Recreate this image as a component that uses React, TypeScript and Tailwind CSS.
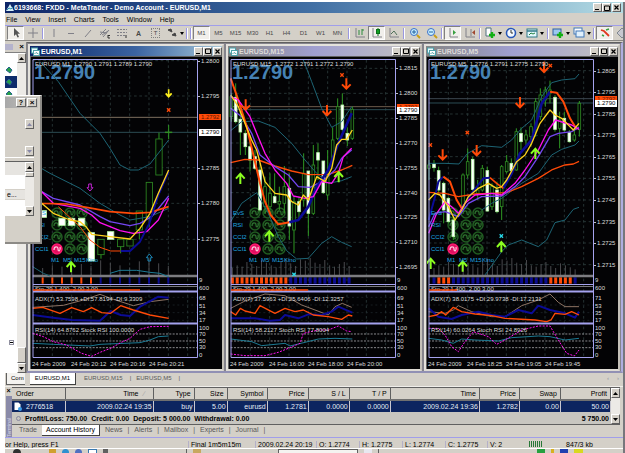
import { type ReactNode } from "react";

// x, body top, body bottom, wick top, wick bottom
type Candle = [number, number, number, number, number];
type MarkKind = "down" | "up" | "cross" | "cyanCross" | "yellowDown" | "hollowUp" | "hollowDown";
type Mark = [MarkKind, number, number];

interface Series {
  color: string;
  pts: string;
  w?: number;
  dash?: string;
}

interface ChartData {
  title: string;
  active?: boolean;
  quote: string;
  offsetX: number;
  left: number;
  prices: [string, number][];
  redY: number;
  bidY: number;
  redColor: string;
  series: Series[];
  full: Candle[];
  hollow: Candle[];
  candleWidth: number;
  barStart: number;
  barStep: number;
  barWidth: number;
  redBars: number[];
  bars: number;
  redLine: number;
  marks: Mark[];
  adxText: string;
  rsiText: string;
  adxScale: string[];
  times: string[];
}

const TEAL = "#1d6474";
const NAVY = "#0b0b96";
const RED = "#ff4a08";
const YELLOW = "#ffd21e";
const MAGENTA = "#ff10f0";
const VIOLET = "#7446f0";
const TAN = "#8f7464";

const charts: ChartData[] = [
  {
    title: "EURUSD,M1",
    active: true,
    quote: "1.2790 1.2791 1.2789 1.2790",
    offsetX: -31,
    left: 98,
    prices: [["1.2800", 62], ["1.2795", 168], ["1.2785", 383], ["1.2780", 490], ["1.2775", 598]],
    redY: 232,
    bidY: 277,
    redColor: "#7d6f60",
    candleWidth: 19,
    series: [
      { color: TEAL, pts: "120,65 175,125 240,220 300,280 330,325 360,375 390,390 415,390 450,372 506,300" },
      { color: TEAL, pts: "98,370 150,400 240,445 300,490 360,525 390,540 450,530 506,505" },
      { color: TEAL, pts: "98,680 130,700 150,708" },
      { color: "#1c7a94", pts: "330,700 360,691 410,691 450,697 480,700 506,710" },
      { color: VIOLET, pts: "98,440 125,455 160,475 240,495 300,530 330,545 390,557 420,550 455,530 506,468", w: 4 },
      { color: MAGENTA, pts: "98,430 125,455 160,490 240,505 275,525 300,548 330,560 360,572 400,580 440,575 475,540 506,475", w: 4 },
      { color: RED, pts: "98,488 125,490 200,492 260,502 330,515 400,520 450,517 506,500", w: 5 },
      { color: RED, pts: "175,500 240,560 270,600 300,622 332,633 362,633", w: 3 },
      { color: NAVY, pts: "362,633 390,633 420,605 448,550 475,465 506,395", w: 6 },
      { color: YELLOW, pts: "98,470 125,490 160,520 210,540 240,545 258,560 275,583 330,590 390,597 420,565 450,520 475,460 506,390", w: 4 },
      { color: TAN, pts: "98,802 190,796 250,780 300,763 340,778 400,797 450,785 506,778" },
      { color: NAVY, pts: "98,825 160,833 215,840 300,842 332,813 362,825 390,828 420,800 475,770 506,773", w: 6 },
      { color: RED, pts: "98,805 128,802 180,820 215,803 250,815 275,803 305,818 332,820 362,797 400,810 450,825 506,835", w: 4 },
      { color: "#1c7a94", pts: "98,910 160,913 270,918 300,913 420,908 450,900 475,890 506,888" },
      { color: MAGENTA, pts: "98,880 130,890 160,905 200,915 245,940 275,949 300,937 332,925 362,908 390,895 420,868 450,860 506,859", dash: "6 4" },
    ],
    full: [
      [130, 512, 532, 512, 532],
      [186, 535, 556, 535, 556],
      [215, 535, 556, 535, 556],
      [245, 535, 556, 535, 556],
      [274, 578, 663, 578, 663],
      [332, 575, 598, 575, 598],
    ],
    hollow: [
      [303, 598, 644, 598, 656],
      [362, 598, 620, 598, 640],
      [390, 598, 618, 598, 618],
      [418, 513, 570, 513, 598],
      [448, 427, 530, 427, 560],
      [477, 297, 405, 278, 405],
      [506, 276, 278, 255, 298],
    ],
    barStart: 128,
    barStep: 29,
    barWidth: 6,
    redBars: [0, 1, 2, 3, 4, 5],
    bars: 14,
    redLine: 109,
    marks: [
      ["yellowDown", 506, 160],
      ["cross", 506, 210],
      ["hollowUp", 448, 653],
      ["hollowDown", 270, 442],
      ["up", 213, 680],
    ],
    adxText: "ADX(7) 53.7598 +DI:57.8194 -DI:9.3309",
    rsiText: "RSI(14) 64.8762 Stock RSI 100.0000",
    adxScale: ["68", "51", "34", "17"],
    times: ["24 Feb 2009", "24 Feb 20:12", "24 Feb 20:16", "24 Feb 20:21"],
  },
  {
    title: "EURUSD,M15",
    quote: "1.2772 1.2791 1.2772 1.2790",
    offsetX: -4,
    left: 17,
    prices: [
      ["1.2815", 85], ["1.2800", 160], ["1.2785", 235], ["1.2770", 309], ["1.2755", 384],
      ["1.2740", 458], ["1.2725", 532], ["1.2710", 607], ["1.2695", 682],
    ],
    redY: 200,
    bidY: 209,
    redColor: "#6e5c4c",
    candleWidth: 8,
    series: [
      { color: TEAL, pts: "235,60 260,125 290,205 320,262 350,245 380,200" },
      { color: TEAL, pts: "17,272 50,245 100,243 150,262 200,310 240,360 275,400 310,430 350,422 380,410" },
      { color: TEAL, pts: "17,545 50,490 95,458 130,520 160,590 185,632 215,657 250,655 290,610 320,590 350,607 380,620" },
      { color: RED, pts: "17,368 60,358 100,360 150,378 200,393 250,404 310,403 350,390 382,376", w: 4 },
      { color: VIOLET, pts: "17,205 50,230 80,280 105,345 150,380 190,405 220,440 255,442 290,425 330,390 350,355 380,330", w: 4 },
      { color: RED, pts: "17,115 40,180 65,260 90,365 105,430 120,485 137,525 160,553 193,547", w: 6 },
      { color: NAVY, pts: "193,547 220,540 250,500 275,440 310,390 340,310 380,220", w: 8 },
      { color: MAGENTA, pts: "17,170 40,180 75,230 95,280 120,340 150,390 185,430 205,468 240,475 265,470 290,425 320,430 340,400 355,350 380,325", w: 4 },
      { color: YELLOW, pts: "17,165 40,200 80,300 95,330 120,425 150,460 185,465 200,485 220,495 235,465 250,480 275,410 300,425 320,385 335,315 350,298 365,298 382,270", w: 4 },
      { color: TAN, pts: "17,805 60,783 120,762 180,767 230,795 310,825 330,800 352,790 380,802" },
      { color: NAVY, pts: "17,835 90,835 135,842 165,840 180,825 220,835 250,823 290,825 320,815 340,800 382,818", w: 6 },
      { color: RED, pts: "17,815 32,825 46,805 60,813 90,820 105,797 150,820 180,805 210,815 235,810 265,825 310,830 350,838 370,825 382,828", w: 4 },
      { color: "#1c7a94", pts: "17,897 80,905 110,917 180,910 195,918 240,907 280,897 330,895 382,897" },
      { color: MAGENTA, pts: "17,942 60,947 120,947 160,937 190,925 225,910 235,880 280,870 310,870 340,858 365,873 380,875", dash: "6 4" },
    ],
    full: [
      [32, 172, 245, 130, 250],
      [46, 238, 276, 210, 345],
      [61, 280, 320, 270, 345],
      [75, 320, 360, 290, 395],
      [90, 350, 385, 330, 390],
      [105, 390, 510, 370, 515],
      [149, 470, 488, 400, 490],
      [193, 445, 558, 400, 600],
      [222, 485, 515, 470, 540],
      [250, 393, 520, 393, 588],
      [279, 338, 360, 310, 420],
      [295, 363, 458, 363, 462],
      [352, 195, 268, 160, 275],
      [367, 280, 300, 262, 318],
    ],
    hollow: [
      [19, 170, 230, 160, 245],
      [120, 440, 500, 410, 520],
      [135, 460, 500, 400, 530],
      [163, 484, 492, 440, 510],
      [178, 440, 490, 378, 520],
      [207, 485, 570, 470, 640],
      [236, 400, 480, 340, 500],
      [265, 375, 520, 315, 525],
      [308, 400, 465, 330, 480],
      [323, 300, 360, 262, 380],
      [338, 200, 295, 175, 300],
      [382, 208, 295, 200, 300],
    ],
    barStart: 22,
    barStep: 15,
    barWidth: 9,
    redBars: [0, 1, 2, 3, 4, 5, 6, 7, 8, 9, 10, 11],
    bars: 25,
    redLine: 79,
    marks: [
      ["down", 62, 195],
      ["down", 306, 212],
      ["down", 364, 132],
      ["cross", 351, 105],
      ["up", 46, 415],
      ["up", 133, 588],
      ["up", 341, 410],
      ["cyanCross", 207, 703],
    ],
    adxText: "ADX(7) 37.5963 +DI:25.6406 -DI:12.3257",
    rsiText: "RSI(14) 58.2127 Stoch RSI 77.8004",
    adxScale: ["69", "51", "34", "17"],
    times: ["24 Feb 2009", "24 Feb 16:00", "24 Feb 18:00", "24 Feb 20:00"],
  },
  {
    title: "EURUSD,M5",
    quote: "1.2776 1.2791 1.2775 1.2790",
    offsetX: -2,
    left: 11,
    prices: [
      ["1.2805", 92], ["1.2795", 157], ["1.2785", 222], ["1.2775", 286], ["1.2765", 350],
      ["1.2755", 415], ["1.2745", 480], ["1.2735", 545], ["1.2725", 609], ["1.2715", 674],
    ],
    redY: 176,
    bidY: 189,
    redColor: "#3c4650",
    candleWidth: 8,
    series: [
      { color: TEAL, pts: "11,370 60,370 102,372 128,340 170,317 230,322 260,300 290,265 320,240 350,170 380,128 410,120 450,116 462,102" },
      { color: TEAL, pts: "170,510 200,490 230,475 290,430 340,400 380,345 410,328 450,315 462,303" },
      { color: TEAL, pts: "180,705 230,635 250,615 290,600 340,620 365,600 390,548 420,540 445,508 462,502" },
      { color: RED, pts: "11,457 60,460 100,470 150,462 200,460 245,458 290,440 340,415 380,390 420,375 445,372 462,364", w: 4 },
      { color: NAVY, pts: "11,540 30,470 40,425 55,410", w: 6 },
      { color: NAVY, pts: "110,505 140,460 175,415 195,413", w: 6 },
      { color: NAVY, pts: "235,445 260,400 285,340 320,300 350,190 375,155", w: 8 },
      { color: RED, pts: "55,410 75,425 95,480 110,505", w: 6 },
      { color: RED, pts: "195,413 215,430 235,445", w: 5 },
      { color: RED, pts: "375,155 395,158 415,185 435,235 455,268", w: 6 },
      { color: VIOLET, pts: "11,560 30,520 60,515 100,530 130,490 170,470 230,468 270,440 300,410 340,350 375,290 400,280 440,275 462,262", w: 4 },
      { color: MAGENTA, pts: "11,580 35,520 60,485 80,500 100,520 120,490 150,465 200,460 230,465 270,430 300,390 340,330 370,270 392,240 440,255 462,268", w: 4 },
      { color: YELLOW, pts: "11,480 30,460 45,465 70,500 90,540 110,510 130,470 160,445 190,430 215,445 230,440 245,420 275,365 300,345 320,310 345,250 375,210 390,225 410,235 445,270 462,250", w: 4 },
      { color: TAN, pts: "11,815 60,820 85,810 100,797 140,815 200,830 240,830 290,797 340,780 375,762 400,787 420,800 462,800" },
      { color: NAVY, pts: "11,805 40,830 80,837 110,825 160,815 200,825 240,830 280,810 320,820 340,797 375,810 420,820 450,833 462,815", w: 6 },
      { color: RED, pts: "11,830 35,825 50,815 62,825 85,802 110,815 150,822 200,827 240,835 330,840 365,845 378,840 390,820 420,823 440,815 462,825", w: 4 },
      { color: "#1c7a94", pts: "11,895 50,900 85,910 110,897 150,900 220,903 260,893 340,888 375,890 420,900 462,895" },
      { color: MAGENTA, pts: "11,865 40,865 60,885 80,920 100,935 120,905 145,875 190,890 215,913 240,900 290,870 340,858 375,858 400,900 425,940 448,948 462,930", dash: "6 4" },
    ],
    full: [
      [27, 372, 383, 360, 395],
      [41, 392, 450, 380, 460],
      [56, 430, 510, 425, 550],
      [70, 475, 545, 470, 550],
      [85, 540, 590, 530, 600],
      [143, 358, 448, 350, 452],
      [187, 392, 513, 380, 515],
      [216, 450, 515, 425, 520],
      [259, 370, 392, 355, 400],
      [288, 280, 305, 262, 330],
      [390, 172, 268, 165, 275],
      [418, 235, 270, 215, 275],
      [433, 278, 305, 270, 308],
    ],
    hollow: [
      [12, 375, 385, 360, 420],
      [114, 405, 500, 400, 505],
      [128, 365, 405, 325, 415],
      [158, 450, 460, 420, 480],
      [172, 385, 450, 375, 455],
      [201, 440, 500, 430, 510],
      [230, 380, 500, 375, 540],
      [245, 365, 395, 345, 400],
      [274, 275, 390, 265, 392],
      [303, 285, 300, 270, 320],
      [318, 260, 290, 250, 320],
      [332, 185, 270, 175, 290],
      [346, 165, 230, 145, 240],
      [361, 150, 180, 140, 200],
      [375, 150, 160, 122, 190],
      [404, 240, 265, 215, 325],
      [448, 285, 300, 270, 305],
      [463, 190, 268, 183, 290],
    ],
    barStart: 27,
    barStep: 15,
    barWidth: 9,
    redBars: [1, 2, 3, 24, 25, 26, 27, 28],
    bars: 30,
    redLine: 30,
    marks: [
      ["down", 53, 345],
      ["down", 155, 332],
      ["down", 285, 188],
      ["down", 357, 82],
      ["cross", 127, 278],
      ["cross", 16, 315],
      ["cross", 376, 77],
      ["up", 331, 340],
      ["up", 229, 620],
      ["up", 113, 678],
      ["up", 17, 670],
      ["cyanCross", 229, 588],
    ],
    adxText: "ADX(7) 38.0175 +DI:29.9738 -DI:17.2131",
    rsiText: "RSI(14) 60.0264 Stoch RSI 24.8926",
    adxScale: ["71", "53", "35", "17"],
    times: ["24 Feb 2009", "24 Feb 18:25", "24 Feb 19:05", "24 Feb 19:45"],
  },
];

const volumes = [22, 30, 26, 40, 34, 28, 45, 38, 30, 24, 42, 50, 36, 28, 48, 44, 52, 38, 34, 46, 30, 26, 34, 40, 28, 22, 36, 30, 24, 18, 22];

const markShapes: Record<MarkKind, ReactNode> = {
  down: <path d="M0-17V12M-13 1L0 14L13 1" fill="none" stroke={RED} strokeWidth="6" />,
  up: <path d="M0 17V-12M-13 1L0-14L13 1" fill="none" stroke="#8cff20" strokeWidth="6" />,
  yellowDown: <path d="M0-12V8M-9 0L0 10L9 0" fill="none" stroke="#fff01e" strokeWidth="5" />,
  cross: <path d="M-5-5L5 5M5-5L-5 5" stroke={RED} strokeWidth="4" />,
  cyanCross: <path d="M-5-5L5 5M5-5L-5 5" stroke="#28d8e8" strokeWidth="4" />,
  hollowUp: <path d="M0-11L9 0H4V10H-4V0H-9Z" fill="none" stroke="#1c88b8" strokeWidth="3" />,
  hollowDown: <path d="M0 11L9 1H4V-10H-4V1H-9Z" fill="none" stroke="#c020d0" strokeWidth="3" />,
};

const lampCols = [26, 39, 51];
const lampRows = [156, 168, 180, 192];

function Lamp({ x, y, red }: { x: number; y: number; red?: boolean }) {
  return (
    <g transform={`translate(${x} ${y})`}>
      <circle r="5" fill={red ? "#e01060" : "#061206"} stroke={red ? "#ff1a70" : "#215c22"} strokeWidth="1.5" />
      <path d="M-3 1C-3-3 1-3 1 0S4 2 3-2" fill="none" stroke={red ? "#ffc0d8" : "#2c6e2e"} strokeWidth="1.3" />
    </g>
  );
}

function Candles({ data, width, filled }: { data: Candle[]; width: number; filled?: boolean }) {
  return (
    <>
      {data.map(([x, top, bottom, high, low]) => (
        <g key={x}>
          <path d={`M${x} ${high}V${low}`} stroke="#2f9a24" strokeWidth="3" />
          <rect
            x={x - width / 2}
            y={top}
            width={width}
            height={bottom - top}
            fill={filled ? "#ffffff" : "#020802"}
            stroke={filled ? "#b8f8a8" : "#2f8a24"}
            strokeWidth="2.5"
          />
        </g>
      ))}
    </>
  );
}

function PriceChart({ c }: { c: ChartData }) {
  const toY = (y: number) => Math.round(y / 3) - 17;
  const right = c.left + 495;
  const vertical: number[] = [];
  for (let x = c.left + 59; x < c.left + 490; x += 58) vertical.push(x);
  const barXs = Array.from({ length: c.bars }, (_, i) => c.barStart + i * (c.barStep === 15 ? 14.6 : c.barStep));

  return (
    <svg viewBox="0 0 191 312" className="block w-full bg-[#030305] font-['Liberation_Sans',Arial,sans-serif]" role="img" aria-label={`${c.title} chart`}>
      <g transform={`translate(${c.offsetX} -17) scale(.33333)`}>
        {/* grid */}
        <g stroke="#2c3c3c" strokeWidth="2.5" strokeDasharray="8 8">
          {vertical.map((x) => <path key={x} d={`M${x} 60V953`} />)}
          {c.prices.map(([, y]) => <path key={y} d={`M${c.left} ${y}H${right}`} />)}
        </g>
        {c.adxScale.map((s, i) => (
          <path key={s} d={`M${c.left} ${772 + i * 23}H${right}`} stroke="#232c30" strokeWidth="2" strokeDasharray="6 8" />
        ))}
        {[882, 903, 923].map((y) => (
          <path key={y} d={`M${c.left} ${y}H${right}`} stroke="#8c8c90" strokeWidth="3" strokeDasharray="6 4" />
        ))}
        <path d={`M${c.left} ${c.redY}H${right}`} stroke={c.redColor} strokeWidth="3" />
        <path d={`M${c.left} ${c.bidY}H${right}`} stroke="#2c4c54" strokeWidth="3" />

        {/* volume and candle strip */}
        {barXs.map((x, i) => (
          <g key={x}>
            <path d={`M${x} ${706 - volumes[i]}V706`} stroke="#4a4a4e" strokeWidth="3" />
            <path d={`M${x} 712V731`} stroke={c.redBars.includes(i) ? RED : "#0c0c90"} strokeWidth={c.barWidth} />
          </g>
        ))}
        <path d={`M${c.left} 708H${right}`} stroke="#7c7c80" strokeWidth="7" />
      </g>

      <text x="3" y="22" className="fill-[#4682b4] text-[20px] font-bold">1.2790</text>

      {/* signal lamps */}
      {lampRows.map((y, row) =>
        lampCols.map((x, col) => <Lamp key={`${x}-${y}`} x={x} y={y} red={row === 3 && col === 0} />)
      )}

      <g transform={`translate(${c.offsetX} -17) scale(.33333)`}>
        <Candles data={c.hollow} width={c.candleWidth} />
        <Candles data={c.full} width={c.candleWidth} filled />
        {c.series.map((s) => (
          <polyline key={s.pts} points={s.pts} fill="none" stroke={s.color} strokeWidth={s.w ?? 3} strokeDasharray={s.dash} strokeLinejoin="round" />
        ))}
        {c.marks.map(([kind, x, y]) => (
          <g key={`${x}-${y}`} transform={`translate(${x} ${y})`}>{markShapes[kind]}</g>
        ))}
      </g>

      <g className="fill-[#1ea8e0] text-[6px]">
        {["EvS", "RSI", "CCI2", "CCI1"].map((label, i) => (
          <text key={label} x="4" y={lampRows[i] + 2}>{label}</text>
        ))}
        <text x="20" y="205">M1</text>
        <text x="32" y="205">M5</text>
        <text x="43" y="205">M15</text>
        <text x="55" y="205">Kino</text>
      </g>

      {/* sub-window frames */}
      <g fill="none" stroke="#a4a2ee">
        <path d="M2 2.5H166.5V300.5H2Z" />
        <path d="M2 227.5H166" />
        <path d="M2 234.5H166" strokeWidth="2" />
        <path d="M2 266.5H166" strokeWidth="2" />
      </g>
      <path d="M2 229.5H166" stroke="#77777c" />

      <g className="fill-[#dcdcdc] text-[6px]">
        <text x="4" y="9">{c.title}&nbsp; {c.quote}</text>
        <text x="4" y="234">Sto-29 1.400, 2.00 3.00</text>
        <text x="4" y="244">{c.adxText}</text>
        <text x="4" y="275">{c.rsiText}</text>
        {c.prices.map(([label, y]) => (
          <text key={label} x="170" y={toY(y) + 2}>{label}</text>
        ))}
        <text x="168" y="225">9</text>
        <text x="168" y="233">600</text>
        {c.adxScale.map((s, i) => (
          <text key={s} x="168" y={[243, 251, 258, 265][i]}>{s}</text>
        ))}
        {["100", "70", "50", "30", "0"].map((s, i) => (
          <text key={s} x="168" y={[273, 279, 286, 292, 300][i]}>{s}</text>
        ))}
        {c.times.map((t, i) => (
          <text key={t} x={1 + i * 39} y="309">{t}</text>
        ))}
      </g>
      <path d={`M2 233H${c.redLine}`} stroke={RED} strokeWidth="1.5" />
      {c.prices.map(([label, y]) => <path key={label} d={`M167 ${toY(y)}.5h2`} stroke="#c0c0c0" />)}
      <rect x="168" y={toY(c.redY) - 3} width="22" height="6" fill={RED} />
      <text x="170" y={toY(c.redY) + 2} className="fill-[#5a1400] text-[6px]">1.2792</text>
      <rect x="168" y={toY(c.bidY) - 3} width="22" height="7" fill="#fff" />
      <text x="170" y={toY(c.bidY) + 2} className="fill-black text-[6px]">1.2790</text>
    </svg>
  );
}

const raised = "border border-t-white border-l-white border-r-[#606060] border-b-[#606060] bg-[#d4d0c8]";

function CaptionButtons() {
  return (
    <div className="flex shrink-0">
      <button aria-label="Minimize" className={`${raised} flex h-[9px] w-[9px] items-end justify-center pb-px`}>
        <svg viewBox="0 0 5 5" className="h-[5px] w-[5px]"><path d="M0 4.5H4" stroke="#000" /></svg>
      </button>
      <button aria-label="Maximize" className={`${raised} flex h-[9px] w-[9px] items-center justify-center`}>
        <svg viewBox="0 0 6 6" className="h-[6px] w-[6px]"><path d="M.5 1H5.5V5.5H.5Z" fill="none" stroke="#000" /></svg>
      </button>
      <button aria-label="Close" className={`${raised} ml-px flex h-[9px] w-[9px] items-center justify-center`}>
        <svg viewBox="0 0 5 5" className="h-[5px] w-[5px]"><path d="M.5.5L4.5 4.5M4.5.5L.5 4.5" stroke="#000" strokeWidth="1.2" /></svg>
      </button>
    </div>
  );
}

function ChartWindow({ c }: { c: ChartData }) {
  return (
    <section className="min-w-0 border-2 border-[#e4e2dc] border-r-[#c4c0b8] border-b-[#dedbd4] bg-[#d4d0c8]">
      <header
        className={
          c.active
            ? "flex h-[10px] items-center bg-linear-to-r from-[#0d2568] via-[#3b63a0] via-55% to-[#a8c8d8] text-white"
            : "flex h-[10px] items-center bg-linear-to-r from-[#858585] via-[#a09fd0] via-45% to-[#c4c2be] text-[#dedcda]"
        }
      >
        <svg viewBox="0 0 9 9" className="ml-px h-[9px] w-[9px] shrink-0">
          <rect x=".5" y="1" width="6" height="5" fill="#e8fbff" stroke="#4fa0a8" />
          <rect x="2.5" y="3.5" width="6" height="5" fill="#fff" stroke="#4fa0a8" />
          <path d="M3.5 7L5 5.5L7.5 7" stroke="#2a8a90" fill="none" strokeWidth=".8" />
        </svg>
        <h2 className="ml-px flex-1 truncate text-[7px] leading-[9px] font-bold">{c.title}</h2>
        <CaptionButtons />
      </header>
      <div className="border-t border-l border-[#606060]">
        <PriceChart c={c} />
      </div>
    </section>
  );
}

function Sep({ wide }: { wide?: boolean }) {
  return (
    <span className={`flex shrink-0 items-center justify-center ${wide ? "w-[5px]" : "w-[4px]"}`}>
      <span className="h-[11px] w-[2px] border-l border-[#9a98e0] bg-white" />
    </span>
  );
}

function Tool({ label, pressed, caret, children }: { label: string; pressed?: boolean; caret?: boolean; children: ReactNode }) {
  return (
    <button
      aria-label={label}
      className={`flex h-[14px] shrink-0 items-center justify-center text-[6px] leading-[9px] text-[#484848] ${caret ? "w-[21px]" : "w-[17px]"} ${pressed ? "border border-t-[#808080] border-r-white border-b-white border-l-[#808080] bg-[#f1efeb]" : ""}`}
    >
      {children}
      {caret && <svg viewBox="0 0 4 3" className="ml-[2px] h-[3px] w-[4px]"><path d="M0 0H4L2 3Z" /></svg>}
    </button>
  );
}

function Glyph({ children }: { children: ReactNode }) {
  return <svg viewBox="0 0 12 12" className="h-[12px] w-[12px]" fill="none" stroke="#808088" strokeWidth="1">{children}</svg>;
}

const plus = <path d="M8 5V11M5 8H11" stroke="#12b012" strokeWidth="2.4" />;

function Toolbar() {
  return (
    <div className="flex h-[15px] items-center overflow-hidden border-b border-[#8a8884] pl-[2px]" role="toolbar" aria-label="Charts">
      <Tool label="Cursor" pressed><Glyph><path d="M4 1V9L6 7.2L7.5 10.5L9 10L7.5 6.8H10Z" fill="#555" stroke="none" /></Glyph></Tool>
      <Tool label="Crosshair"><Glyph><path d="M6 1V11M1 6H11" /></Glyph></Tool>
      <Sep />
      <Tool label="Vertical line"><Glyph><path d="M6 2V10" /></Glyph></Tool>
      <Tool label="Horizontal line"><Glyph><path d="M3 6.5H9" /></Glyph></Tool>
      <Tool label="Trendline"><Glyph><path d="M3 10L9 3" /></Glyph></Tool>
      <Tool label="Channel"><Glyph><path d="M1 8L7 2M4 10L10 3M1 5L8 6M3 8L9 4" /><path d="M9 8.5H11M9 8V11H11" stroke="#333" /></Glyph></Tool>
      <Tool label="Fibonacci"><Glyph><path d="M1 2.5H11M1 5.5H11M1 8.5H9" strokeDasharray="2 1" /><path d="M10 8V11" stroke="#333" /></Glyph></Tool>
      <Tool label="Text"><span className="text-[7px] font-bold">A</span></Tool>
      <Tool label="Text label"><span className="border border-dotted border-[#808080] px-[2px] leading-[8px]">T</span></Tool>
      <Tool label="Arrows" caret><Glyph><path d="M2 3L5 2L6 5ZM6 8L9 6L10 9Z" fill="#444" stroke="#444" /></Glyph></Tool>
      <Sep /><Sep />
      {["M1", "M5", "M15", "M30", "H1", "H4", "D1", "W1", "MN"].map((p) => (
        <Tool key={p} label={p} pressed={p === "M1"}>{p}</Tool>
      ))}
      <Sep wide />
      <Tool label="Bar chart"><Glyph><path d="M2 1V10H11" /><path d="M5 3V8M8 2V8M8 3H10" stroke="#2c8a3c" /></Glyph></Tool>
      <Tool label="Candlesticks" pressed><Glyph><path d="M2 1V10H11" /><path d="M7 1V9" stroke="#087018" /><rect x="5.5" y="2.5" width="3" height="4" fill="#12a022" stroke="#087018" /></Glyph></Tool>
      <Tool label="Line chart"><Glyph><path d="M2 1V10H11" /><path d="M3 7L6 4L9 8" stroke="#507058" /></Glyph></Tool>
      <Sep />
      <Tool label="Zoom in"><Glyph><circle cx="5" cy="5" r="3.5" fill="#c8f0ff" stroke="#3c70c8" /><path d="M5 3V7M3 5H7" stroke="#2060a0" /><path d="M8 8L11 11" stroke="#c8a018" strokeWidth="2" /></Glyph></Tool>
      <Tool label="Zoom out"><Glyph><circle cx="5" cy="5" r="3.5" fill="#c8f0ff" stroke="#3c70c8" /><path d="M3 5H7" stroke="#2060a0" /><path d="M8 8L11 11" stroke="#c8a018" strokeWidth="2" /></Glyph></Tool>
      <Sep />
      <Tool label="Auto scroll" pressed><Glyph><path d="M3 1V10H11" /><path d="M6 3L9 5.5L6 8Z" fill="#38a040" stroke="none" /></Glyph></Tool>
      <Tool label="Chart shift"><Glyph><path d="M2 1V10H11M7 2V9" /><path d="M11 3L8 5.5L11 8Z" fill="#a04830" stroke="none" /></Glyph></Tool>
      <Sep />
      <Tool label="Indicators" caret><Glyph><path d="M2 1H7V9H2Z" fill="#fff" stroke="#507080" />{plus}</Glyph></Tool>
      <Tool label="Periods" caret><Glyph><circle cx="6" cy="6" r="4.5" fill="#f4faff" stroke="#2858b8" strokeWidth="1.6" /><path d="M6 3V6H8" stroke="#333" /></Glyph></Tool>
      <Tool label="Templates" caret><Glyph><rect x="1" y="2" width="10" height="8" fill="#e4f8fc" stroke="#307888" /><path d="M1 4H11" stroke="#307888" strokeWidth="1.5" /><path d="M3 8L5 6L7 7L9 6" stroke="#208040" /></Glyph></Tool>
      <Sep wide />
      <Tool label="New order" caret><Glyph><rect x="1" y="2" width="8" height="6" fill="#9cc8f0" stroke="#3060a0" />{plus}</Glyph></Tool>
      <Tool label="Windows" caret><Glyph><rect x="1" y="1" width="8" height="6" fill="#fff" stroke="#4078b8" /><rect x="3" y="4" width="8" height="6" fill="#e0f0fc" stroke="#4078b8" /></Glyph></Tool>
      <Sep />
      <Tool label="Expert advisors" pressed><Glyph><path d="M2 3L5 4L10 9" stroke="#e03820" strokeWidth="1.8" /><path d="M7 3L10 2M3 8L5 9" stroke="#38a040" strokeWidth="1.5" /></Glyph></Tool>
      <Tool label="Options"><Glyph><path d="M6 1L11 6L6 11L1 6Z" fill="#c8c8d0" stroke="#808890" /></Glyph></Tool>
    </div>
  );
}

function Arrow({ up, dim }: { up?: boolean; dim?: boolean }) {
  return (
    <button aria-label={up ? "Scroll up" : "Scroll down"} className={`${raised} flex h-[10px] w-[9px] shrink-0 items-center justify-center`}>
      <svg viewBox="0 0 5 3" className="h-[3px] w-[5px]"><path d={up ? "M0 3H5L2.5 0Z" : "M0 0H5L2.5 3Z"} fill={dim ? "#8888a8" : "#000"} /></svg>
    </button>
  );
}

function Navigator() {
  return (
    <aside className="flex w-[22px] shrink-0 flex-col border-r border-[#808080]">
      <div className="flex h-[10px] items-center justify-between pr-[2px]">
        <span className="h-[6px] w-[8px] bg-[#b4b3cc]" />
        <button aria-label="Close navigator" className="text-[8px] leading-[8px] font-bold">×</button>
      </div>
      <div className="flex flex-1 border-t border-[#808080] bg-white">
        <div className="relative flex-1">
          <ul className="pt-[11px]">
            {[0, 1, 2].map((i) => (
              <li key={i} className={i === 1 ? "flex h-[12px] items-center bg-[#0e2c6c]" : "flex h-[12px] items-center"}>
                <svg viewBox="0 0 8 8" className="h-[8px] w-[8px]"><path d="M1 4L4 1L7 4L5 7Z" fill="#28a048" stroke="#286090" /></svg>
              </li>
            ))}
          </ul>
          <span className="absolute bottom-[28px] left-[4px] flex h-[5px] w-[5px] items-center border border-[#9090a0]"><span className="h-px w-full bg-black" /></span>
        </div>
        <div className="flex w-[9px] flex-col justify-between bg-[#eceae6]">
          <Arrow up />
          <div>
            <div className={`${raised} h-[16px]`} />
            <Arrow />
          </div>
        </div>
      </div>
    </aside>
  );
}

function FloatingDialog() {
  return (
    <div role="dialog" aria-label="Properties" className="absolute top-[54px] left-0 flex h-[149px] w-[37px] flex-col border-t border-r-2 border-b-2 border-t-white border-r-[#8c8a86] border-b-[#8c8a86] bg-[#d4d0c8]">
      <div className="mt-px mr-[2px] flex h-[11px] items-center justify-end gap-px bg-linear-to-r from-[#a8a8a8] to-[#c4c2be] pr-px">
        <button aria-label="Help" className={`${raised} flex h-[9px] w-[10px] items-center justify-center text-[7px] leading-[7px] font-bold`}>?</button>
        <button aria-label="Close" className={`${raised} flex h-[9px] w-[10px] items-center justify-center text-[8px] leading-[7px] font-bold`}>×</button>
      </div>
      <div className="mt-[11px] mr-[6px] flex h-[39px] flex-col items-end justify-between border-b border-white pb-px">
        <Arrow up dim />
        <Arrow dim />
      </div>
      <div className="mt-[3px] mr-[6px] flex h-[55px] border-t border-[#606060] bg-white">
        <div className="flex-1">
          <div className="h-[13px] bg-[#e6e4e0]" />
          <div className="mt-[14px] h-[11px] border-y border-[#d4d0c8] bg-[#e6e4e0] pl-[2px] text-[7px] leading-[9px]">e...</div>
        </div>
        <div className="flex w-[9px] flex-col bg-[#eceae6]">
          <Arrow up />
          <div className={`${raised} h-[5px]`} />
          <div className="flex-1" />
          <Arrow />
        </div>
      </div>
    </div>
  );
}

const columns: [string, number, string][] = [
  ["Order", 53, "2776518"],
  ["Time", 88, "2009.02.24 19:35"],
  ["Type", 41, "buy"],
  ["Size", 33, "5.00"],
  ["Symbol", 40, "eurusd"],
  ["Price", 41, "1.2781"],
  ["S / L", 41, "0.0000"],
  ["T / P", 41, "0.0000"],
  ["Time", 89, "2009.02.24 19:36"],
  ["Price", 40, "1.2782"],
  ["Swap", 41, "0.00"],
  ["Profit", 50, "50.00"],
];

function Terminal() {
  return (
    <section className="flex pr-[3px]" aria-label="Terminal">
      <div className="flex w-[7px] shrink-0 flex-col items-center overflow-hidden">
        <button aria-label="Close terminal" className="text-[7px] leading-[7px] font-bold">×</button>
        <span className="mt-[2px] w-[6px] flex-1 bg-[#8a8aa8] text-[5px] leading-[6px] text-[#d8d8e8] [writing-mode:sideways-lr]">Terminal</span>
      </div>
      <div className="min-w-0 flex-1">
        <div className="flex border-t border-b border-[#606060]">
          <div className="min-w-0 flex-1 bg-[#d4d0c8]">
            <table className="w-full table-fixed border-collapse text-[7px] leading-[9px]">
              <colgroup>{columns.map(([, w], i) => <col key={i} style={{ width: w }} />)}</colgroup>
              <thead>
                <tr className="h-[12px] border-b-2 border-[#707070]">
                  {columns.map(([name], i) => (
                    <th key={i} className={`border-r border-[#606060] font-normal ${i === 0 ? "pl-[4px] text-left" : "pr-[3px] text-right"}`}>
                      {name}{i === 1 && <span className="mr-[5px] ml-[5px] text-[#a0a0a0]">∕</span>}
                    </th>
                  ))}
                </tr>
              </thead>
              <tbody>
                <tr className="h-[12px] bg-[#0d2560] text-[#e4ecf4]">
                  {columns.map(([, , value], i) => (
                    <td key={i} className={`border-r border-[#c8c8d0] p-0 ${i === 0 ? "pl-[2px]" : "pr-px text-right"}`}>
                      {i === 0 ? (
                        <span className="flex items-center gap-[4px]">
                          <svg viewBox="0 0 8 9" className="h-[9px] w-[8px]"><path d="M.5.5H4.5L6.5 2.5V8H.5Z" fill="#fff" /><circle cx="6" cy="7" r="2" fill="#3c9ce8" /></svg>
                          {value}
                        </span>
                      ) : value}
                    </td>
                  ))}
                </tr>
              </tbody>
            </table>
            <div className="flex h-[12px] items-center justify-between bg-[#c8c6c0] pr-[2px] pl-[4px] text-[7px] leading-[9px] font-bold">
              <span className="flex items-center gap-[4px]">
                <span className="h-[5px] w-[5px] rounded-full border border-[#8888a0]" />
                Profit/Loss: 750.00&nbsp; Credit: 0.00&nbsp; Deposit: 5 000.00&nbsp; Withdrawal: 0.00
              </span>
              <span>5 750.00</span>
            </div>
          </div>
          <div className="flex w-[9px] flex-col bg-[#eceae6]">
            <Arrow up />
            <div className="flex-1" />
            <Arrow />
          </div>
        </div>
        <nav className="flex h-[12px] items-start text-[7px] leading-[10px] text-[#585858]" aria-label="Terminal tabs">
          <button className="w-[30px] pl-[2px]">Trade</button>
          <button className="w-[58px] border-r border-b border-[#404040] bg-white text-black">Account History</button>
          {["News", "Alerts", "Mailbox", "Experts", "Journal"].map((t) => (
            <button key={t} className="flex items-center gap-[5px] pl-[5px]">{t}<span>|</span></button>
          ))}
        </nav>
      </div>
    </section>
  );
}

const status: [string, string][] = [
  ["Final 1m5m15m", "w-[67px]"],
  ["2009.02.24 20:19", "w-[61px]"],
  ["O: 1.2774", "w-[43px]"],
  ["H: 1.2775", "w-[43px]"],
  ["L: 1.2774", "w-[43px]"],
  ["C: 1.2775", "w-[42px]"],
  ["V: 2", "w-[38px]"],
];

export default function App() {
  return (
    <div className="min-h-screen overflow-hidden bg-white pt-[2px] pl-[5px] font-['Liberation_Sans',Arial,sans-serif] text-black">
      <div className="border-r-2 border-[#77777c] bg-[#d4d0c8]">
        <header className="flex h-[11px] items-center bg-linear-to-r from-[#0d2568] via-[#4270a4] via-50% to-[#b4dce4] pr-[2px] pl-px text-white">
          <svg viewBox="0 0 8 8" className="h-[8px] w-[8px]"><path d="M4 0L8 7H0Z" fill="#d8f0f8" /><path d="M1 6L3 4L5 5L7 3" stroke="#2890b0" fill="none" /></svg>
          <h1 className="flex-1 truncate text-[7px] leading-[9px] font-bold">6193668: FXDD - MetaTrader - Demo Account - EURUSD,M1</h1>
          <CaptionButtons />
        </header>
        <nav className="flex h-[13px] items-center gap-[8px] border-b border-[#a09eea] pl-px text-[7px] leading-[9px]" aria-label="Menu">
          {["File", "View", "Insert", "Charts", "Tools", "Window", "Help"].map((m) => <button key={m}>{m}</button>)}
        </nav>
        <Toolbar />

        <main className="relative flex pt-px">
          <Navigator />
          <div className="grid min-w-0 flex-1 grid-cols-3 gap-[2px] border-t border-r-2 border-b-2 border-t-[#606060] border-r-[#b0aee0] border-b-[#9190b4] bg-[#85848c] pt-px pr-px pl-px">
            {charts.map((c) => <ChartWindow key={c.title} c={c} />)}
          </div>
          <FloatingDialog />
        </main>

        <nav className="flex h-[14px] items-start border-b border-[#f0eeea] text-[6px] leading-[11px] text-[#585858]" aria-label="Open charts">
          <button className="mr-[5px] ml-px w-[19px] border-b border-l border-[#606060] bg-[#f4f3f0] pl-[4px] text-left text-black">Com</button>
          <button className="w-[46px] border-r border-b border-[#404040] bg-white text-black">EURUSD,M1</button>
          <button className="flex gap-[7px] pl-[8px]">EURUSD,M15<span>|</span></button>
          <button className="flex gap-[7px] pl-[5px]">EURUSD,M5<span>|</span></button>
          <span className="flex-1" />
          <button aria-label="Previous tab" className="w-[10px] text-[#9090a0]">‹</button>
          <button aria-label="Next tab" className="w-[10px] text-[#9090a0]">›</button>
        </nav>

        <Terminal />

        <footer>
          <div className="flex h-[11px] items-start overflow-hidden border-t border-[#a09eea] pt-[3px] text-[7px] leading-[8px]">
            <span className="min-w-0 flex-1 truncate">or Help, press F1</span>
            {status.map(([text, width]) => (
              <span key={text} className={`${width} shrink-0 border-l border-[#b4b0c8] pl-[2px]`}>{text}</span>
            ))}
            <svg viewBox="0 0 15 6" className="mr-[22px] ml-[4px] h-[6px] w-[15px] shrink-0"><path d="M.5 0V6M2.5 0V6M4.5 0V6M6.5 0V6M8.5 0V6M10.5 0V6M12.5 0V6" stroke="#287838" /></svg>
            <span className="w-[57px] shrink-0">847/3 kb</span>
          </div>
          <div className="flex h-[6px] items-start gap-[6px] overflow-hidden border-t border-white pl-[8px]">
            <span className="h-[5px] w-[8px] rounded-t-full bg-[#303030]" />
            <span className="ml-[22px] h-[5px] w-[7px] bg-[#d0a030]" />
            <span className="h-[5px] w-[7px] rounded-t-full bg-[#3090d0]" />
            <span className="h-[5px] w-[7px] rounded-t-full bg-[#5070c0]" />
            <span className="h-[5px] w-[9px] border border-[#3878b0] bg-white" />
            <span className="h-[5px] w-[5px] bg-[#606060]" />
            <span className="ml-[3px] h-[5px] w-[70px] border-r border-[#606060]" />
            <span className="h-[5px] w-[8px] bg-[#c8a860]" />
            <span className="h-[5px] w-[65px]" />
            <span className="h-[5px] w-[80px] border border-[#606060] bg-[#f4f3f0]" />
            <span className="h-[5px] w-[8px] bg-[#e8e8f0]" />
            <span className="h-[5px] flex-1 border-l border-[#606060]" />
            <span className="h-[5px] w-[8px] bg-[#28a040]" />
            <span className="h-[5px] w-[3px] bg-[#d8b020]" />
            <span className="h-[5px] w-[8px] bg-[#2040b0]" />
            <span className="mr-[40px] h-[5px] w-[9px] bg-[#d8d820]" />
          </div>
        </footer>
      </div>
    </div>
  );
}
